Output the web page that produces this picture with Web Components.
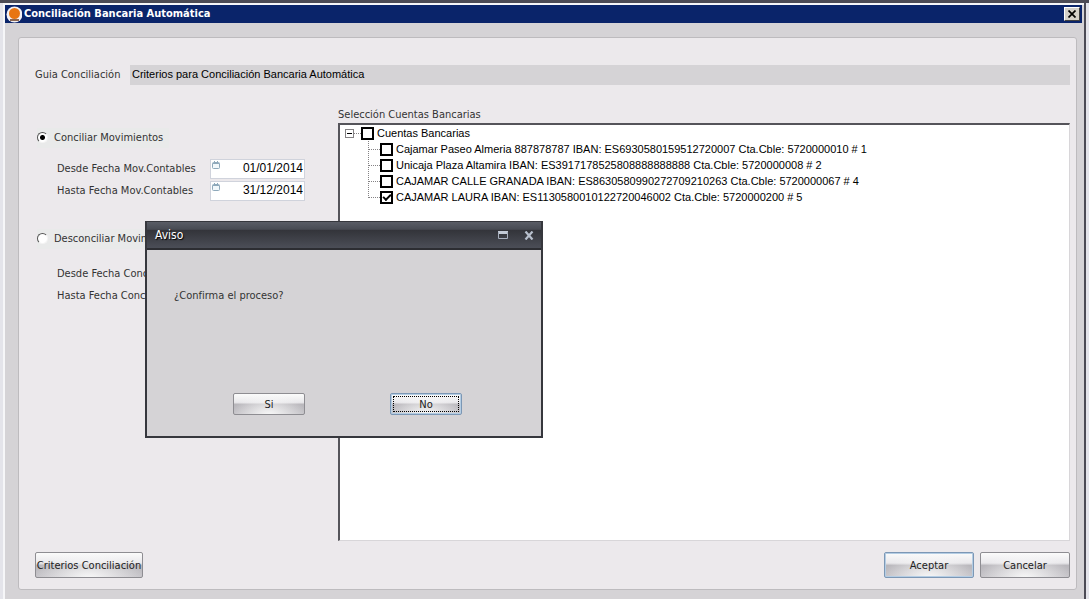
<!DOCTYPE html>
<html lang="es">
<head>
<meta charset="utf-8">
<title>Conciliación Bancaria Automática</title>
<style>
:root {
    --ui-font: "DejaVu Sans Condensed", "Noto Sans", sans-serif;
    --sys-font: "Liberation Sans", Arial, sans-serif;
    --panel: #ece9ec;
    --face: #d5d3d6;
}
body {
    margin: 0;
    height: 100vh;
    box-sizing: border-box;
    display: flex;
    border-top: 3px solid #4c4b55;
    font: 11px/16px var(--ui-font);
    color: #333;
    background: #e4e4ea;
}
.columns {
    flex: 1;
    display: flex;
    min-height: 0;
}
</style>
</head>
<body>
<app-window caption="Conciliación Bancaria Automática">
    <guide-field></guide-field>
    <div class="columns">
        <movement-options></movement-options>
        <account-tree></account-tree>
    </div>
    <form-actions></form-actions>
    <notice-dialog slot="dialog" caption="Aviso">¿Confirma el proceso?</notice-dialog>
</app-window>

<script>
class AppWindow extends HTMLElement {
  constructor() {
    super();
    this.attachShadow({ mode: 'open' });
  }
  connectedCallback() {
    this.shadowRoot.innerHTML = `
<style>
:host {
    flex: 1;
    display: flex;
    flex-direction: column;
    position: relative;
    box-sizing: border-box;
    min-width: 0;
    margin: 0 3px 0 3px;
    border-right: 2px solid #4c4b55;
    background: var(--face);
}
.frame {
    flex: 1;
    display: flex;
    flex-direction: column;
    min-height: 0;
    border: solid #f6f6f8;
    border-width: 2px 0 0 2px;
    padding-right: 2px;
}
header {
    display: flex;
    align-items: center;
    height: 18px;
    background: #0a246a;
    color: #fff;
}
header svg { flex: none; }
h1 {
    flex: 1;
    margin: 0 2px;
    font-size: 11px;
    font-weight: bold;
}
.close {
    display: flex;
    align-items: center;
    justify-content: center;
    width: 16px;
    height: 14px;
    margin-right: 2px;
    padding: 0;
    border: 1px solid;
    border-color: #fff #404040 #404040 #fff;
    background: #d4d0c8;
}
main {
    flex: 1;
    display: flex;
    flex-direction: column;
    min-height: 0;
    margin: 14px 5px 9px 13px;
    padding: 27px 6px 11px 16px;
    border: 1px solid #bdbbbe;
    border-radius: 3px;
    background: var(--panel);
}
</style>
<div class="frame">
    <header>
        <svg width="17" height="17" viewBox="0 0 17 17" aria-hidden="true">
            <circle cx="9.5" cy="8.5" r="8" fill="#f4f1f4"/>
            <circle cx="9.5" cy="7.5" r="5.5" fill="#e87511"/>
            <path d="M5 14h9" stroke="#6b3a1c" stroke-width="1.5"/>
        </svg>
        <h1></h1>
        <button class="close" aria-label="Cerrar">
            <svg width="8" height="8" viewBox="0 0 8 8"><path d="M.5 .5l7 7M7.5 .5l-7 7" stroke="#000" stroke-width="1.7"/></svg>
        </button>
    </header>
    <main><slot></slot></main>
</div>
<slot name="dialog"></slot>
    `;
    this.shadowRoot.querySelector('h1').textContent = this.getAttribute('caption');
  }
}

class GuideField extends HTMLElement {
  constructor() {
    super();
    this.attachShadow({ mode: 'open' });
    this.shadowRoot.innerHTML = `
<style>
:host {
    display: flex;
    align-items: center;
    margin-bottom: 22px;
}
label { width: 95px; }
input {
    flex: 1;
    min-width: 0;
    box-sizing: border-box;
    height: 20px;
    padding: 0 2px 2px;
    border: 0;
    font: 11px/16px var(--sys-font);
    color: #000;
    background: var(--face);
}
</style>
<label for="guide">Guia Conciliación</label>
<input id="guide" readonly value="Criterios para Conciliación Bancaria Automática">
    `;
  }
}

// Fila de fecha: etiqueta + caja con icono de calendario
class DateField extends HTMLElement {
  constructor() {
    super();
    this.attachShadow({ mode: 'open' });
  }
  connectedCallback() {
    this.shadowRoot.innerHTML = `
<style>
:host {
    display: flex;
    align-items: center;
    margin: 0 0 2px 22px;
}
label {
    width: 153px;
    white-space: nowrap;
}
.box {
    display: flex;
    align-items: flex-start;
    box-sizing: border-box;
    width: 95px;
    height: 20px;
    border: 1px solid #d0d3dc;
    background: #fff;
}
svg { flex: none; }
input {
    flex: 1;
    min-width: 0;
    box-sizing: border-box;
    height: 18px;
    padding: 0 1px 2px;
    border: 0;
    outline: 0;
    font: 12px/16px var(--sys-font);
    color: #000;
    text-align: right;
    background: none;
}
</style>
<label for="date"></label>
<span class="box">
    <svg width="11" height="11" viewBox="0 0 11 11" aria-hidden="true">
        <rect x="1.5" y="2.5" width="7" height="6" rx="1" fill="#f2f8fb" stroke="#8fa9bb"/>
        <path d="M2 3.5h6M3.5 1v2M6.5 1v2" stroke="#8fa9bb"/>
    </svg>
    <input id="date">
</span>
    `;
    this.shadowRoot.querySelector('label').textContent = this.getAttribute('label');
    this.shadowRoot.querySelector('input').value = this.getAttribute('value') || '';
  }
}

class MovementOptions extends HTMLElement {
  constructor() {
    super();
    this.attachShadow({ mode: 'open' });
    this.shadowRoot.innerHTML = `
<style>
:host {
    display: block;
    width: 303px;
    padding-top: 21px;
}
.option {
    display: flex;
    align-items: center;
    gap: 6px;
    width: 132px;
    height: 20px;
    margin: 0 0 11px 2px;
    white-space: nowrap;
    background: #e9eaea;
}
.option.second { margin: 28px 0 15px 2px; }
input {
    appearance: none;
    flex: none;
    box-sizing: border-box;
    width: 11px;
    height: 11px;
    margin: 0 0 2px;
    border: 1px solid;
    border-color: #555 #f4f4f4 #f4f4f4 #555;
    border-radius: 50%;
    background: #fff;
}
input:checked { background: radial-gradient(circle, #000 2px, #fff 3px); }
</style>
<label class="option"><input type="radio" name="mode" checked>Conciliar Movimientos</label>
<date-field label="Desde Fecha Mov.Contables" value="01/01/2014"></date-field>
<date-field label="Hasta Fecha Mov.Contables" value="31/12/2014"></date-field>
<label class="option second"><input type="radio" name="mode">Desconciliar Movimientos</label>
<date-field label="Desde Fecha Conciliación"></date-field>
<date-field label="Hasta Fecha Conciliación"></date-field>
    `;
  }
}

class AccountTree extends HTMLElement {
  constructor() {
    super();
    this.attachShadow({ mode: 'open' });
    const accounts = [
      'Cajamar Paseo Almeria 887878787 IBAN: ES6930580159512720007 Cta.Cble: 5720000010 # 1',
      'Unicaja Plaza Altamira IBAN: ES3917178525808888888888 Cta.Cble: 5720000008 # 2',
      'CAJAMAR CALLE GRANADA IBAN: ES8630580990272709210263 Cta.Cble: 5720000067 # 4',
      'CAJAMAR LAURA IBAN: ES1130580010122720046002 Cta.Cble: 5720000200 # 5'
    ];
    this.shadowRoot.innerHTML = `
<style>
:host {
    flex: 1;
    display: flex;
    flex-direction: column;
    min-width: 0;
}
.tree {
    flex: 1;
    padding: 0 5px;
    border: solid;
    border-width: 2px 1px 1px 2px;
    border-color: #55545a #d8d6d9 #d8d6d9 #55545a;
    background: #fff;
    font: 11px/16px var(--sys-font);
    color: #000;
}
.root, label {
    display: flex;
    align-items: center;
    height: 16px;
    white-space: nowrap;
}
label { gap: 3px; }
.toggle {
    display: flex;
    width: 9px;
    height: 9px;
    padding: 0;
    border: 1px solid #848284;
    background: #fff;
}
.dash {
    width: 7px;
    border-top: 1px dotted #848284;
}
ul {
    list-style: none;
    margin: 0 0 0 23px;
    padding: 0;
}
li {
    display: flex;
    align-items: center;
    background: linear-gradient(#848284 50%, transparent 50%) 0 0 / 1px 2px repeat-y;
}
/* la rama termina en el último nodo */
li:last-child {
    background: linear-gradient(#848284, #848284) 0 0 / 1px 1px no-repeat,
        linear-gradient(#848284, #848284) 0 2px / 1px 1px no-repeat,
        linear-gradient(#848284, #848284) 0 4px / 1px 1px no-repeat,
        linear-gradient(#848284, #848284) 0 6px / 1px 1px no-repeat;
}
li .dash { width: 12px; }
input {
    appearance: none;
    flex: none;
    display: grid;
    place-items: center;
    box-sizing: border-box;
    width: 13px;
    height: 13px;
    margin: 0;
    border: 2px solid #000;
    background: #fff;
}
input:checked::after {
    content: "";
    box-sizing: border-box;
    width: 8px;
    height: 5px;
    margin-bottom: 2px;
    border: solid #000;
    border-width: 0 0 2px 2px;
    transform: rotate(-45deg);
}
</style>
<span id="caption">Selección Cuentas Bancarias</span>
<div class="tree" role="group" aria-labelledby="caption">
    <div class="root">
        <button class="toggle" aria-label="Contraer">
            <svg width="7" height="7"><path d="M1 3.5h5" stroke="#000"/></svg>
        </button>
        <span class="dash"></span>
        <label><input type="checkbox">Cuentas Bancarias</label>
    </div>
    <ul></ul>
</div>
    `;
    const list = this.shadowRoot.querySelector('ul');
    accounts.forEach((name, i) => {
      const li = document.createElement('li');
      li.innerHTML = `<span class="dash"></span><label><input type="checkbox">${name}</label>`;
      li.querySelector('input').checked = i === 3;
      list.appendChild(li);
    });
  }
}

class GlossButton extends HTMLElement {
  constructor() {
    super();
    this.attachShadow({ mode: 'open' });
    this.shadowRoot.innerHTML = `
<style>
:host { display: flex; }
button {
    flex: 1;
    min-width: 0;
    padding: 1px 0 0;
    border: 1px solid #8e8d92;
    border-radius: 2px;
    font: inherit;
    color: #222;
    white-space: nowrap;
    background:
        radial-gradient(ellipse at 50% 110%, #fafafa, transparent 75%),
        linear-gradient(#fbfbfb 0%, #e9e8eb 42%, #b9b7bc 52%, #c4c2c7 100%);
}
:host([primary]) button {
    border-color: #7c97b5;
    box-shadow: inset 0 0 0 1px #b4cde4;
}
:host([focused]) button {
    outline: 1px dotted #000;
    outline-offset: -4px;
}
</style>
<button type="button"><slot></slot></button>
    `;
  }
}

class FormActions extends HTMLElement {
  constructor() {
    super();
    this.attachShadow({ mode: 'open' });
    this.shadowRoot.innerHTML = `
<style>
:host {
    display: flex;
    gap: 6px;
    height: 26px;
    margin-top: 11px;
}
gloss-button { width: 90px; }
.criteria {
    width: 108px;
    margin-right: auto;
}
</style>
<gloss-button class="criteria">Criterios Conciliación</gloss-button>
<gloss-button primary>Aceptar</gloss-button>
<gloss-button>Cancelar</gloss-button>
    `;
  }
}

class NoticeDialog extends HTMLElement {
  constructor() {
    super();
    this.attachShadow({ mode: 'open' });
  }
  connectedCallback() {
    this.shadowRoot.innerHTML = `
<style>
:host {
    position: absolute;
    left: 142px;
    top: 218px;
    width: 398px;
    box-sizing: border-box;
    border: solid #36373d;
    border-width: 1px 2px 2px;
    background: var(--face);
}
header {
    display: flex;
    align-items: center;
    gap: 16px;
    height: 26px;
    padding: 0 7px 0 8px;
    border-bottom: 2px solid #2c2d32;
    background: linear-gradient(#5a5d66, #484b53 28%, #33343a 32%, #4b4e57);
}
h2 {
    flex: 1;
    margin: 0;
    font: 12px/16px var(--ui-font);
    color: #fff;
    text-shadow: 1px 1px 1px #000;
}
header button {
    display: flex;
    padding: 0;
    border: 0;
    background: none;
}
p {
    margin: 0;
    padding: 38px 27px 89px;
}
footer {
    display: flex;
    justify-content: space-between;
    padding: 0 79px 21px 86px;
}
gloss-button {
    width: 72px;
    height: 22px;
}
</style>
<div role="dialog" aria-labelledby="title">
    <header>
        <h2 id="title"></h2>
        <button aria-label="Maximizar">
            <svg width="10" height="8" viewBox="0 0 10 8"><path d="M0 1.5h10" stroke="#c3cad6" stroke-width="3"/><path d="M.5 1v6.500h9V1" fill="none" stroke="#a9b1bf"/></svg>
        </button>
        <button aria-label="Cerrar">
            <svg width="10" height="9" viewBox="0 0 10 9"><path d="M1.5 .5l7 8M8.5 .5l-7 8" stroke="#b7bfcc" stroke-width="2.2"/></svg>
        </button>
    </header>
    <p><slot></slot></p>
    <footer>
        <gloss-button>Si</gloss-button>
        <gloss-button primary focused>No</gloss-button>
    </footer>
</div>
    `;
    this.shadowRoot.querySelector('h2').textContent = this.getAttribute('caption');
  }
}

window.customElements.define('gloss-button', GlossButton);
window.customElements.define('date-field', DateField);
window.customElements.define('guide-field', GuideField);
window.customElements.define('movement-options', MovementOptions);
window.customElements.define('account-tree', AccountTree);
window.customElements.define('form-actions', FormActions);
window.customElements.define('notice-dialog', NoticeDialog);
window.customElements.define('app-window', AppWindow);
</script>
</body>
</html>
